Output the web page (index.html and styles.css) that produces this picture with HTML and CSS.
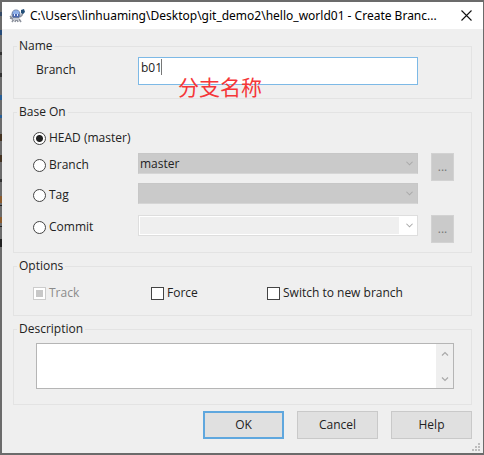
FILE: index.html
```html
<!DOCTYPE html>
<html lang="en">
<head>
<meta charset="utf-8">
<title>Create Branch</title>
<link rel="stylesheet" href="styles.css">
</head>
<body>
<div class="window">
  <header class="titlebar">
    <svg class="app-icon" viewBox="0 0 16 14" aria-hidden="true">
      <path d="M1 7l2 2M1 9l3 1M3 13l2-3M6 13l1-3M9 13l-1-3M12 13l-2-3M11 8l2-2 1-3" fill="none" stroke="#8d929d" stroke-width="1.6"/>
      <ellipse cx="7" cy="5.5" rx="4.5" ry="5" fill="#6d7f9f"/>
      <ellipse cx="7" cy="4.5" rx="3.4" ry="3.3" fill="#8fb0e8"/>
      <path d="M4 5h6v3H4z" fill="#4a67b0"/>
      <path d="M5 5h1v2H5zM8 5h1v2H8z" fill="#e8efff"/>
      <path d="M4 9h6v2H4z" fill="#c5c9d2"/>
      <path d="M12 1l3-1 1 3-2 2-2-1z" fill="#234f78"/>
    </svg>
    <h1 class="title">C:\Users\linhuaming\Desktop\git_demo2\hello_world01 - Create Branc...</h1>
    <button class="close" type="button" aria-label="Close">
      <svg viewBox="0 0 11 11"><path d="M.5.5l10 10M10.5.5l-10 10" fill="none" stroke="#111" stroke-width="1.1"/></svg>
    </button>
  </header>
  <form class="content">
    <fieldset class="group name-group">
      <legend>Name</legend>
      <div class="fields">
        <label class="name-label" for="name">Branch</label>
        <div class="name-field">
          <input class="name-input" id="name" type="text" value="b01">
          <span class="caret"></span>
          <span class="note" lang="zh">分支名称</span>
        </div>
      </div>
    </fieldset>
    <fieldset class="group base-group">
      <legend>Base On</legend>
      <div class="fields base-fields">
        <label class="choice head-choice"><input type="radio" name="base" checked>HEAD (master)</label>
        <label class="choice"><input type="radio" name="base">Branch</label>
        <div class="combo">
          <select aria-label="Branch" disabled><option>master</option></select>
          <svg class="chevron" viewBox="0 0 8 5"><path d="M.5.5L4 4 7.5.5"/></svg>
        </div>
        <button class="browse" type="button" aria-label="Browse branches" disabled>...</button>
        <label class="choice"><input type="radio" name="base">Tag</label>
        <div class="combo">
          <select aria-label="Tag" disabled><option></option></select>
          <svg class="chevron" viewBox="0 0 8 5"><path d="M.5.5L4 4 7.5.5"/></svg>
        </div>
        <span></span>
        <label class="choice"><input type="radio" name="base">Commit</label>
        <div class="combo editable">
          <select aria-label="Commit" disabled><option></option></select>
          <svg class="chevron" viewBox="0 0 8 5"><path d="M.5.5L4 4 7.5.5"/></svg>
        </div>
        <button class="browse" type="button" aria-label="Browse commits" disabled>...</button>
      </div>
    </fieldset>
    <fieldset class="group options-group">
      <legend>Options</legend>
      <div class="options">
        <label class="choice muted"><input type="checkbox" disabled>Track</label>
        <label class="choice"><input type="checkbox">Force</label>
        <label class="choice"><input type="checkbox">Switch to new branch</label>
      </div>
    </fieldset>
    <fieldset class="group description-group">
      <legend>Description</legend>
      <div class="description">
        <textarea aria-label="Description"></textarea>
        <div class="scrollbar">
          <svg viewBox="0 0 8 5"><path d="M1 4.5l3-3 3 3"/></svg>
          <svg viewBox="0 0 8 5"><path d="M1 .5l3 3 3-3"/></svg>
        </div>
      </div>
    </fieldset>
    <div class="actions">
      <button class="action primary" type="submit">OK</button>
      <button class="action" type="button">Cancel</button>
      <button class="action" type="button">Help</button>
    </div>
  </form>
  <svg class="grip" viewBox="0 0 9 9" aria-hidden="true"><path d="M6 0h2v2H6zM3 3h2v2H3zM6 3h2v2H6zM0 6h2v2H0zM3 6h2v2H3zM6 6h2v2H6z" fill="#bdbdbd"/></svg>
</div>
</body>
</html>
```
FILE: styles.css
```css
* { box-sizing: border-box; }

body {
  margin: 0;
  min-height: 100vh;
  display: flex;
  padding: 2px 1px 2px 2px;
  background:
    linear-gradient(#0000 12px, #364a66 12px 16px, #0000 16px 30px, #264b79 30px 35px, #0000 35px 52px, #333 52px 55px, #0000 55px 73px, #333 73px 77px, #0000 77px 95px, #285f96 95px 100px, #0000 100px 115px, #285f96 115px 118px, #0000 118px 134px, #443322 134px 141px, #0000 141px 155px, #443322 155px 162px, #0000 162px 179px, #333 179px 182px, #0000 182px 196px, #8a5a2c 196px 203px, #0000 203px 205px, #222 205px 206px, #0000 206px 217px, #8a5a2c 217px 223px, #0000 223px 226px, #222 226px 227px, #0000 227px 239px, #222 239px 247px, #0000 247px) left top / 2px 100% no-repeat,
    #6b6b6b;
  color: #222;
  font: 12px/16px "Open Sans", "Noto Sans", sans-serif;
}

button, input, select, textarea {
  margin: 0;
  font: inherit;
  color: inherit;
  border-radius: 0;
}

.window {
  position: relative;
  flex: 1;
  min-width: 0;
  display: flex;
  flex-direction: column;
  background: #efefef;
}

.titlebar {
  display: flex;
  align-items: center;
  height: 27px;
  padding: 0 11px 0 7px;
  background: #fff;
  color: #000;
}

.app-icon { width: 16px; height: 14px; flex: none; }

.title {
  flex: 1;
  min-width: 0;
  margin: 0 4px 0 5px;
  overflow: hidden;
  white-space: nowrap;
  text-overflow: ellipsis;
  font-size: 12px;
  line-height: 20px;
  font-weight: 400;
  font-family: "Noto Sans", sans-serif;
}

.close {
  display: flex;
  padding: 0;
  border: 0;
  background: none;
}

.close svg { width: 11px; height: 11px; }

.content {
  display: flex;
  flex-direction: column;
  gap: 5px;
  padding: 9px 11px 14px;
}

.group {
  min-width: 0;
  margin: 0;
  padding: 0 17px 0 19px;
  border: 1px solid #e3e3e3;
}

.group legend {
  margin-left: -16px;
  padding: 0 2px;
}

.fields {
  display: grid;
  grid-template-columns: 105px 1fr 36px;
}

.name-group { padding-top: 3px; padding-bottom: 13px; }
.name-label { padding: 5px 0 0 3px; }
.name-field { position: relative; }

.name-input {
  display: block;
  width: 100%;
  height: 28px;
  padding: 0 2px 8px;
  border: 1px solid #7db9e6;
  background: #fff;
  outline: 0;
}

.caret {
  position: absolute;
  left: 23px;
  top: 2px;
  width: 1px;
  height: 16px;
  background: #777;
}

.note {
  position: absolute;
  left: 40px;
  top: 17px;
  color: #f53638;
  font: 21px/24px "Noto Sans CJK SC", sans-serif;
  white-space: nowrap;
}

.base-group { padding-top: 6px; padding-bottom: 10px; }

.base-fields {
  grid-template-rows: 27px 30px 32px 27px;
  align-items: start;
}

.head-choice { grid-column: 1 / -1; }

.choice {
  display: flex;
  align-items: center;
  gap: 3px;
  height: 24px;
}

.choice input {
  appearance: none;
  flex: none;
  width: 13px;
  height: 13px;
  border: 1px solid #444;
  background: #fff;
}

.choice input[type="radio"] { border-radius: 50%; }
.choice input[type="radio"]:checked { background: radial-gradient(circle, #222 0 3px, #fff 4px); }
.muted { color: #8b8b8b; }

.choice input:disabled {
  border-color: #ccc;
  background: linear-gradient(#c8c8c8, #c8c8c8) center / 7px 7px no-repeat #fff;
}

.combo { position: relative; }

.combo select {
  appearance: none;
  display: block;
  width: 100%;
  height: 21px;
  padding: 0 18px 0 1px;
  border: 1px solid #c7c7c7;
  border-bottom-color: #d6d6d6;
  background: #cacaca;
  opacity: 1;
}

.editable select {
  padding: 1px 18px 1px 1px;
  border-color: #dedede;
  background: linear-gradient(#efefef, #efefef) content-box, #fff;
}

.chevron {
  position: absolute;
  right: 5px;
  top: 8px;
  width: 7px;
  height: 5px;
  pointer-events: none;
}

.chevron path, .scrollbar path {
  fill: none;
  stroke: #a9a9a9;
  stroke-width: 1.2;
}

.browse {
  justify-self: end;
  width: 23px;
  height: 28px;
  padding: 0;
  border: 1px solid #d2d2d2;
  background: #cacaca;
  color: #777;
}

.options-group { padding-top: 7px; padding-bottom: 10px; }

.options {
  display: grid;
  grid-template-columns: 118px 116px 1fr;
}

.description-group { padding: 6px 17px 15px 22px; }
.description-group legend { margin-left: -19px; }

.description {
  display: flex;
  height: 46px;
  border: 1px solid #b5b5b5;
  background: #fff;
}

.description textarea {
  flex: 1;
  min-width: 0;
  padding: 2px;
  border: 0;
  outline: 0;
  resize: none;
  background: #fff;
}

.scrollbar {
  display: flex;
  flex-direction: column;
  justify-content: space-between;
  align-items: center;
  width: 17px;
  padding: 7px 0 6px;
  background: #efefef;
}

.scrollbar svg { width: 8px; height: 5px; }

.actions {
  display: flex;
  justify-content: flex-end;
  gap: 13px;
  padding-top: 1px;
}

.action {
  width: 81px;
  height: 28px;
  padding: 0;
  border: 1px solid #c9c9c9;
  background: #e0e0e0;
}

.primary { border: 2px solid #5fa7de; }

.grip {
  position: absolute;
  right: 2px;
  bottom: 1px;
  width: 9px;
  height: 9px;
}
```
